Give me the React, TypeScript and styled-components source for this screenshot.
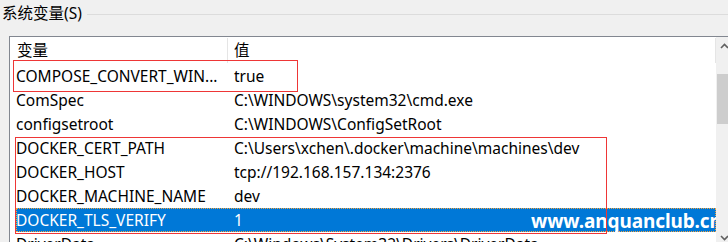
import React from "react";
import styled, { createGlobalStyle } from "styled-components";

const Global = createGlobalStyle`
  html, body {
    margin: 0;
    padding: 0;
    background: #f0f0f0;
    overflow: hidden;
  }
  body {
    font-family: "Noto Sans", "Noto Sans CJK SC", sans-serif;
    font-size: 15.5px;
    color: #000;
  }
`;

const Page = styled.div`
  position: relative;
  width: 728px;
  height: 242px;
  overflow: hidden;
`;

const GroupHeader = styled.div`
  display: flex;
  align-items: center;
  height: 28px;
  padding-left: 2px;
  gap: 5px;
`;

const GroupLabel = styled.span`
  white-space: nowrap;
  line-height: 20px;
  margin-top: -2px;
`;

const GroupLine = styled.div`
  flex: 1;
  height: 1px;
  background: #dcdcdc;
`;

const ListView = styled.div`
  display: flex;
  margin: 8px 0 0 9px;
  width: 723px;
  height: 220px;
  border-top: 1px solid #828790;
  border-left: 1px solid #828790;
  background: #fff;
`;

const ListContent = styled.div`
  position: relative;
  flex: 1;
  overflow: hidden;
`;

const HeaderRow = styled.div`
  display: grid;
  grid-template-columns: 218px 1fr;
  height: 27px;
`;

const HeaderCell = styled.div<{ $last?: boolean }>`
  display: flex;
  align-items: center;
  padding-left: ${(p) => (p.$last ? "6px" : "7px")};
  padding-bottom: 2px;
  border-right: 1px solid #e5e5e5;
  margin: 1px 0 2px;
`;

const Row = styled.div<{ $selected?: boolean }>`
  display: grid;
  grid-template-columns: 212px 1fr;
  height: 24px;
  margin-left: 6px;
  align-items: center;
  white-space: nowrap;
  background: ${(p) => (p.$selected ? "#0078d7" : "transparent")};
  color: ${(p) => (p.$selected ? "#fff" : "#000")};
  outline: ${(p) => (p.$selected ? "1px dotted #f5a540" : "none")};
  outline-offset: -1px;
`;

const NameCell = styled.div`
  overflow: hidden;
`;

const ValueCell = styled.div`
  padding-left: 6px;
  overflow: hidden;
`;

const Scrollbar = styled.div`
  width: 17px;
  display: flex;
  flex-direction: column;
  background: #f0f0f0;
`;

const ScrollButton = styled.div`
  height: 17px;
  display: flex;
  align-items: center;
  justify-content: center;
  color: #606060;
`;

const Track = styled.div`
  flex: 1;
  display: flex;
  flex-direction: column;
  padding: 20px 2px 0 1px;
`;

const Thumb = styled.div`
  height: 50px;
  background: #cdcdcd;
`;

const BottomGap = styled.div`
  height: 11px;
`;

const Watermark = styled.div`
  position: absolute;
  left: 521px;
  top: 171px;
  font-family: "Noto Sans", sans-serif;
  font-weight: bold;
  font-size: 19px;
  color: #fff;
  white-space: nowrap;
  letter-spacing: -0.1px;
`;

const RedBox = styled.div<{ $l: number; $t: number; $w: number; $h: number }>`
  position: absolute;
  left: ${(p) => p.$l}px;
  top: ${(p) => p.$t}px;
  width: ${(p) => p.$w}px;
  height: ${(p) => p.$h}px;
  border: 1px solid #ee3636;
  box-sizing: border-box;
  pointer-events: none;
`;

const Chevron = ({ up }: { up?: boolean }) => (
  <svg width="9" height="6" viewBox="0 0 9 6">
    <path
      d={up ? "M1 5 L4.5 1.5 L8 5" : "M1 1 L4.5 4.5 L8 1"}
      fill="none"
      stroke="currentColor"
      strokeWidth="1.6"
    />
  </svg>
);

const rows: { name: string; value: string; selected?: boolean }[] = [
  { name: "COMPOSE_CONVERT_WIN...", value: "true" },
  { name: "ComSpec", value: "C:\\WINDOWS\\system32\\cmd.exe" },
  { name: "configsetroot", value: "C:\\WINDOWS\\ConfigSetRoot" },
  { name: "DOCKER_CERT_PATH", value: "C:\\Users\\xchen\\.docker\\machine\\machines\\dev" },
  { name: "DOCKER_HOST", value: "tcp://192.168.157.134:2376" },
  { name: "DOCKER_MACHINE_NAME", value: "dev" },
  { name: "DOCKER_TLS_VERIFY", value: "1", selected: true },
  { name: "DriverData", value: "C:\\Windows\\System32\\Drivers\\DriverData" },
];

export default function App() {
  return (
    <>
      <Global />
      <Page>
        <GroupHeader>
          <GroupLabel>系统变量(S)</GroupLabel>
          <GroupLine />
        </GroupHeader>
        <ListView>
          <ListContent>
            <HeaderRow>
              <HeaderCell>变量</HeaderCell>
              <HeaderCell $last>值</HeaderCell>
            </HeaderRow>
            {rows.map((r) => (
              <Row key={r.name} $selected={r.selected}>
                <NameCell>{r.name}</NameCell>
                <ValueCell>{r.value}</ValueCell>
              </Row>
            ))}
            <Watermark>www.anquanclub.cn</Watermark>
          </ListContent>
          <Scrollbar>
            <ScrollButton>
              <Chevron up />
            </ScrollButton>
            <Track>
              <Thumb />
            </Track>
            <ScrollButton>
              <Chevron />
            </ScrollButton>
            <BottomGap />
          </Scrollbar>
        </ListView>
        <RedBox $l={13} $t={60} $w={285} $h={32} />
        <RedBox $l={15} $t={137} $w={592} $h={97} />
      </Page>
    </>
  );
}
